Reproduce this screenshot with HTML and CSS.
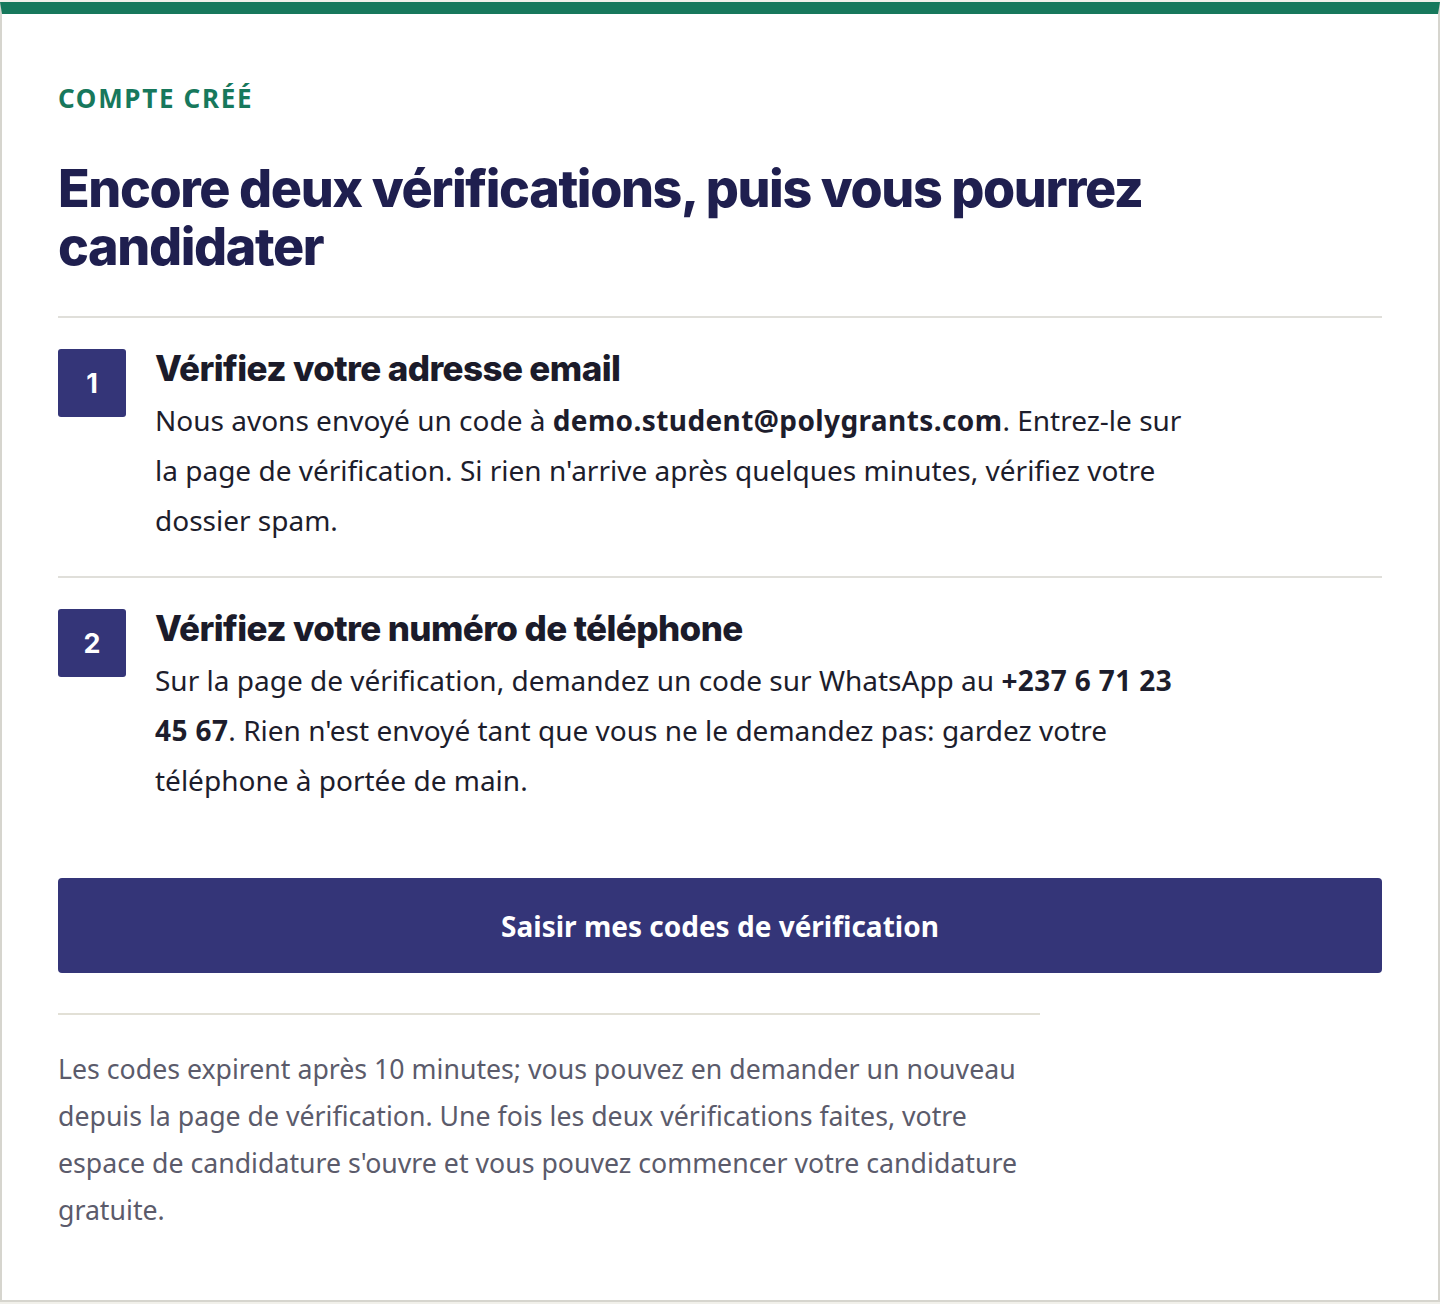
FILE: index.html
```html
<!DOCTYPE html>
<html lang="fr">

<head>
    <meta charset="UTF-8">
    <meta name="viewport" content="width=device-width, initial-scale=1.0">
    <title>Compte créé</title>
    <link rel="stylesheet" href="styles.css">
</head>

<body>
    <main class="card">
        <p class="eyebrow">Compte créé</p>
        <h1 class="title">Encore deux vérifications, puis vous pourrez candidater</h1>

        <ol class="steps">
            <li class="step">
                <span class="step-num">1</span>
                <div class="step-body">
                    <h2 class="step-title">Vérifiez votre adresse email</h2>
                    <p class="step-text">Nous avons envoyé un code à <strong>demo.student@polygrants.com</strong>. Entrez-le sur la page de vérification. Si rien n'arrive après quelques minutes, vérifiez votre dossier spam.</p>
                </div>
            </li>
            <li class="step">
                <span class="step-num">2</span>
                <div class="step-body">
                    <h2 class="step-title">Vérifiez votre numéro de téléphone</h2>
                    <p class="step-text">Sur la page de vérification, demandez un code sur WhatsApp au <strong>+237 6 71 23 45 67</strong>. Rien n'est envoyé tant que vous ne le demandez pas: gardez votre téléphone à portée de main.</p>
                </div>
            </li>
        </ol>

        <button class="primary-btn" type="button">Saisir mes codes de vérification</button>

        <p class="note">Les codes expirent après 10 minutes; vous pouvez en demander un nouveau depuis la page de vérification. Une fois les deux vérifications faites, votre espace de candidature s'ouvre et vous pouvez commencer votre candidature gratuite.</p>
    </main>
</body>

</html>
```

FILE: styles.css
```css
body {
    margin: 0;
    background-color: #f1f0ea;
    font-family: "Noto Sans", Lato, sans-serif;
    color: #1d1d2c;
}

.card {
    box-sizing: border-box;
    margin-top: 2px;
    height: 1300px;
    background-color: #fff;
    border: 2px solid #d6d5ce;
    border-top: 12px solid #17785c;
    padding: 68px 56px 0 56px;
}

.eyebrow {
    margin: 0;
    font-size: 26px;
    font-weight: 700;
    letter-spacing: 1.7px;
    line-height: 32px;
    text-transform: uppercase;
    color: #17785c;
}

.title {
    max-width: 1120px;
    margin: 46px 0 0 0;
    font-family: Inter, "Liberation Sans", sans-serif;
    font-size: 52px;
    font-weight: 800;
    line-height: 58px;
    letter-spacing: -1.4px;
    color: #1f1f4f;
}

.steps {
    list-style: none;
    margin: 40px 0 0 0;
    padding: 0;
}

.step {
    display: flex;
    gap: 29px;
    border-top: 2px solid #e0dfda;
    padding: 31px 0 31px 0;
}

.step + .step {
    padding-bottom: 73px;
}

.step-num {
    flex: none;
    width: 68px;
    height: 68px;
    border-radius: 3px;
    background-color: #343578;
    color: #fff;
    font-family: Inter, "Liberation Sans", sans-serif;
    font-size: 27px;
    font-weight: 700;
    display: flex;
    align-items: center;
    justify-content: center;
}

.step-body {
    max-width: 1036px;
}

.step-title {
    margin: 0;
    font-family: Inter, "Liberation Sans", sans-serif;
    font-size: 35px;
    font-weight: 800;
    line-height: 38px;
    letter-spacing: -0.6px;
    color: #1b1b2a;
}

.step-text {
    margin: 8px 0 0 0;
    font-size: 28px;
    line-height: 50px;
}

.step-text strong {
    font-weight: 700;
    letter-spacing: 0.4px;
}

.primary-btn {
    display: block;
    width: 100%;
    height: 95px;
    border: none;
    border-radius: 4px;
    background-color: #343578;
    color: #fff;
    font-family: "Noto Sans", Lato, sans-serif;
    font-size: 28px;
    font-weight: 700;
    cursor: pointer;
}

.note {
    width: 982px;
    margin: 40px 0 0 0;
    padding-top: 30px;
    border-top: 2px solid #e2e0d6;
    font-size: 26.7px;
    line-height: 47px;
    color: #5b5b6b;
}
```
